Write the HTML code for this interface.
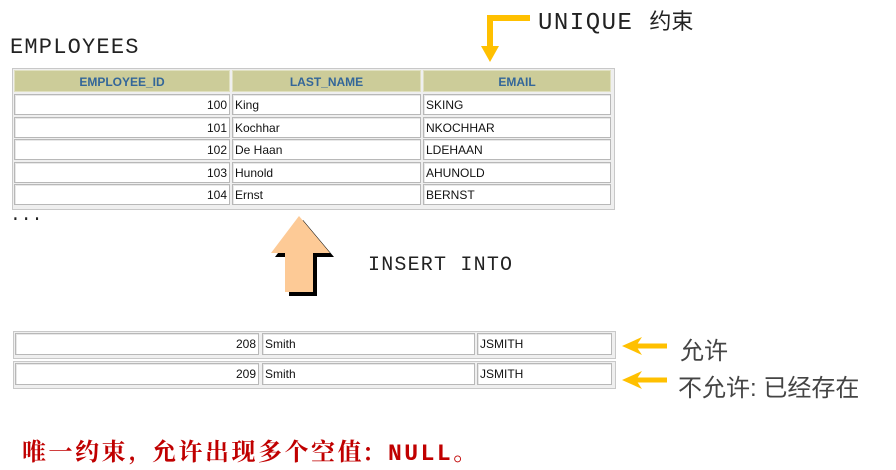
<!DOCTYPE html>
<html><head><meta charset="utf-8"><style>
body{margin:0;width:896px;height:470px;background:#fff;position:relative;overflow:hidden;font-family:"Liberation Sans",sans-serif}
.a{position:absolute}
.mono{font-family:"Liberation Mono","Noto Sans CJK SC",monospace;color:#222}
.c{position:absolute;border:1px solid #b8b8b8;box-shadow:inset 1px 1px 0 #e8e8e8;background:#fff;font-size:12px;color:#111;line-height:21px;box-sizing:border-box;padding:0 2px;white-space:nowrap}
.h{position:absolute;background:#cccc99;color:#336699;font-weight:bold;font-size:12px;text-align:center;line-height:22px;box-sizing:border-box;border:1px solid #e0e0c0}
.r{text-align:right}
.cn{font-family:"Liberation Sans","Noto Sans CJK SC",sans-serif;color:#444}
</style></head><body>
<div class="a mono" style="left:538px;top:4px;font-size:24px;letter-spacing:1.5px">UNIQUE <span style="letter-spacing:0;font-size:22px">约束</span></div>
<div class="a mono" style="left:10px;top:35px;font-size:22px;letter-spacing:1.2px">EMPLOYEES</div>
<div class="a" style="left:12px;top:68px;width:601px;height:140px;border:1px solid #c8c8c8;background:#efefef"></div>
<div class="h" style="left:14px;top:70px;width:216px;height:22px">EMPLOYEE_ID</div>
<div class="h" style="left:232px;top:70px;width:189px;height:22px">LAST_NAME</div>
<div class="h" style="left:423px;top:70px;width:188px;height:22px">EMAIL</div>

<div class="c r" style="left:14px;top:94px;width:216px;height:21px">100</div>
<div class="c" style="left:232px;top:94px;width:189px;height:21px">King</div>
<div class="c" style="left:423px;top:94px;width:188px;height:21px">SKING</div>
<div class="c r" style="left:14px;top:117px;width:216px;height:21px">101</div>
<div class="c" style="left:232px;top:117px;width:189px;height:21px">Kochhar</div>
<div class="c" style="left:423px;top:117px;width:188px;height:21px">NKOCHHAR</div>
<div class="c r" style="left:14px;top:139px;width:216px;height:21px">102</div>
<div class="c" style="left:232px;top:139px;width:189px;height:21px">De Haan</div>
<div class="c" style="left:423px;top:139px;width:188px;height:21px">LDEHAAN</div>
<div class="c r" style="left:14px;top:162px;width:216px;height:21px">103</div>
<div class="c" style="left:232px;top:162px;width:189px;height:21px">Hunold</div>
<div class="c" style="left:423px;top:162px;width:188px;height:21px">AHUNOLD</div>
<div class="c r" style="left:14px;top:184px;width:216px;height:21px">104</div>
<div class="c" style="left:232px;top:184px;width:189px;height:21px">Ernst</div>
<div class="c" style="left:423px;top:184px;width:188px;height:21px">BERNST</div>
<div class="a mono" style="left:10px;top:206px;font-size:18px">...</div>

<div class="a" style="left:13px;top:331px;width:601px;height:26px;border:1px solid #c8c8c8;background:#efefef"></div>
<div class="c r" style="left:15px;top:333px;width:244px;height:22px">208</div>
<div class="c" style="left:262px;top:333px;width:213px;height:22px">Smith</div>
<div class="c" style="left:477px;top:333px;width:135px;height:22px">JSMITH</div>
<div class="a" style="left:13px;top:361px;width:601px;height:26px;border:1px solid #c8c8c8;background:#efefef"></div>
<div class="c r" style="left:15px;top:363px;width:244px;height:22px">209</div>
<div class="c" style="left:262px;top:363px;width:213px;height:22px">Smith</div>
<div class="c" style="left:477px;top:363px;width:135px;height:22px">JSMITH</div>

<svg class="a" style="left:0;top:0" width="896" height="470">
<polygon points="303,220 334,257 317,257 317,296 289,296 289,257 275,257" fill="#000"/>
<polygon points="299,216 330,253 313,253 313,292 285,292 285,253 271,253" fill="#fdca96"/>
<path d="M530,18 H490 V50" stroke="#ffc000" stroke-width="6" fill="none"/>
<polygon points="481,46 499,46 490,62" fill="#ffc000"/>
<path d="M667,346 H636" stroke="#ffc000" stroke-width="5"/>
<polygon points="622,346 642,337 636,346 642,355" fill="#ffc000"/>
<path d="M667,380 H636" stroke="#ffc000" stroke-width="5"/>
<polygon points="622,380 642,371 636,380 642,389" fill="#ffc000"/>
</svg>
<div class="a mono" style="left:368px;top:254px;font-size:20px;letter-spacing:1.2px">INSERT INTO</div>
<div class="a cn" style="left:680px;top:331px;font-size:24px">允许</div>
<div class="a cn" style="left:678px;top:368px;font-size:24px">不允许: 已经存在</div>
<div class="a" style="left:22px;top:432px;font-size:24px;font-weight:bold;color:#c00000;font-family:'Noto Serif CJK SC',serif;letter-spacing:2.5px;white-space:nowrap">唯一约束<span style="display:inline-block;width:24px">,</span>允许出现多个空值<span style="display:inline-block;width:24px">:</span><span style="font-family:'Liberation Mono',monospace;font-size:23px">NULL</span>。</div>
</body></html>
